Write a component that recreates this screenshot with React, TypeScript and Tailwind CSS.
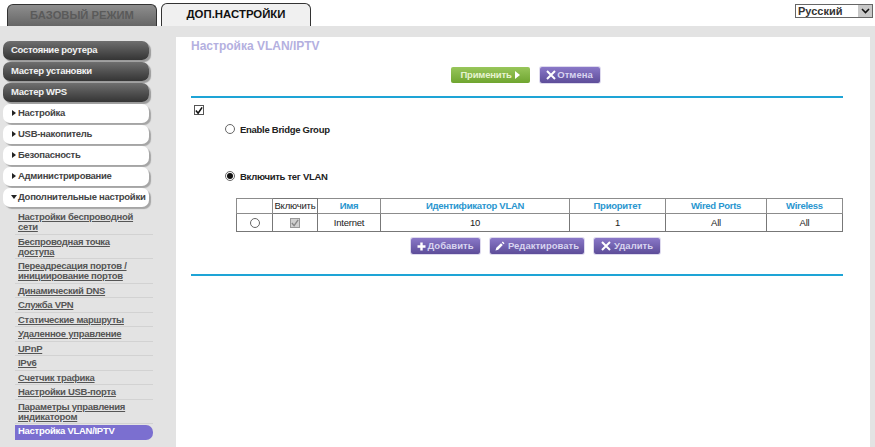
import React from "react";

const dark = ["Состояние роутера", "Мастер установки", "Мастер WPS"];
const light = ["Настройка", "USB-накопитель", "Безопасность", "Администрирование"];
const sub: [string, string][] = [
  ["Настройки беспроводной", "сети"],
  ["Беспроводная точка", "доступа"],
  ["Переадресация портов /", "инициирование портов"],
  ["Динамический DNS", ""],
  ["Служба VPN", ""],
  ["Статические маршруты", ""],
  ["Удаленное управление", ""],
  ["UPnP", ""],
  ["IPv6", ""],
  ["Счетчик трафика", ""],
  ["Настройки USB-порта", ""],
  ["Параметры управления", "индикатором"],
];

function PurpleButton({ w, icon, label, gap }: { w: string; icon: React.ReactNode; label: string; gap: string }) {
  return (
    <div className={`${w} ${gap} h-[16px] rounded-[2px] bg-gradient-to-b from-[#8a78c8] to-[#5d4d99] shadow-[0_0_0_1px_#dedaee] flex items-center justify-center text-[9.5px] font-bold text-[#d8d4f0]`}>
      {icon}
      <span>{label}</span>
    </div>
  );
}

const XIcon = () => (
  <svg width="10" height="10" viewBox="0 0 10 10"><path d="M1 1 L9 9 M9 1 L1 9" stroke="#fff" strokeWidth="2" /></svg>
);
const PlusIcon = () => (
  <svg width="9" height="9" viewBox="0 0 9 9"><path d="M4.5 0.5 V8.5 M0.5 4.5 H8.5" stroke="#fff" strokeWidth="2.4" /></svg>
);
const PenIcon = () => (
  <svg width="10" height="10" viewBox="0 0 10 10"><path d="M0.5 9.5 L1.3 6.8 L6 2.2 L7.8 4 L3.2 8.7 Z M6.8 1.4 L7.8 0.5 L9.5 2.2 L8.6 3.2 Z" fill="#fff" /></svg>
);

const th = "border border-[#8c8c8c] font-bold text-[#2a96cf] text-[9.5px] tracking-[-0.28px] leading-none h-[15px] p-0 text-center";
const td = "border border-[#777] text-[9.5px] tracking-[-0.2px] leading-none text-[#222] p-0 text-center h-[18px]";
const menuText = "text-[9.5px] tracking-[-0.28px] font-bold";

export default function App() {
  return (
    <div className="w-[875px] h-[447px] overflow-hidden bg-white font-['Liberation_Sans',Arial,sans-serif] flex flex-col">
      <div className="h-[26px] shrink-0 flex items-end relative pl-[7px] gap-[4px]">
        <div className="w-[150px] h-[22px] rounded-t-[6px] border border-b-0 border-[#333] bg-gradient-to-b from-[#8e8e8e] to-[#666] flex items-center justify-center text-[11.2px] font-bold text-[#5a5a5a]">
          БАЗОВЫЙ РЕЖИМ
        </div>
        <div className="w-[150px] h-[23px] rounded-t-[6px] border border-b-0 border-[#333] bg-[#f0f0f0] flex items-center justify-center text-[11.4px] font-bold text-[#111]">
          ДОП.НАСТРОЙКИ
        </div>
        <div className="absolute left-[795px] top-[4px] w-[78px] h-[14px] border border-[#666] bg-white flex items-center justify-between text-[11px] font-bold text-[#333] pl-[2px]">
          <span>Русский</span>
          <span className="w-[14px] h-[12px] bg-[#c8c8c8] flex items-center justify-center">
            <svg width="9" height="6" viewBox="0 0 9 6"><path d="M1 1 L4.5 4.5 L8 1" fill="none" stroke="#111" strokeWidth="1.6" /></svg>
          </span>
        </div>
      </div>
      <div className="flex-1 bg-[#e3e3e3] flex pr-[5px]">
        <div className="w-[176px] shrink-0 pt-[15px] pl-[3px]">
          <div className="w-[146px] flex flex-col gap-[2px]">
            {dark.map((t) => (
              <div key={t} className={`h-[19px] rounded-[7px] bg-gradient-to-b from-[#6f6f6f] to-[#353535] shadow-[2px_2px_1px_#9a9a9a] flex items-center pl-[8px] pb-[1px] text-[#f2f2f2] ${menuText}`}>
                {t}
              </div>
            ))}
            {light.map((t) => (
              <div key={t} className={`h-[19px] rounded-[7px] bg-white shadow-[2px_2px_1px_#a5a5a5] flex items-center pl-[9px] pb-[1px] gap-[2px] text-[#444] ${menuText}`}>
                <span className="w-0 h-0 border-y-[3px] border-y-transparent border-l-[4px] border-l-[#222]" />
                {t}
              </div>
            ))}
            <div className={`h-[19px] rounded-[7px] bg-white shadow-[2px_2px_1px_#a5a5a5] flex items-center pl-[8px] pb-[1px] gap-[1px] text-[#444] whitespace-nowrap ${menuText}`}>
              <span className="w-0 h-0 border-x-[3px] border-x-transparent border-t-[4px] border-t-[#222]" />
              Дополнительные настройки
            </div>
          </div>
          <div className="w-[150px] mt-[3px] pl-[12px]">
            {sub.map(([a, b]) => (
              <div key={a} className={`border-b border-[#d2d2d2] pt-[2px] pb-[1.5px] pl-[3px] leading-[10px] text-[#555] underline ${menuText}`}>
                <div>{a}</div>
                {b && <div>{b}</div>}
              </div>
            ))}
            <div className={`mt-[1px] h-[15px] bg-[#7b6fd0] rounded-r-[7px] pl-[3px] leading-[12px] text-white ${menuText}`}>
              Настройка VLAN/IPTV
            </div>
          </div>
        </div>
        <div className="w-[694px] h-[410px] mt-[11px] bg-white pl-[15px] pr-[27px]">
          <div className="text-[12px] leading-[18px] font-bold text-[#b4b0e0]">Настройка VLAN/IPTV</div>
          <div className="mt-[12px] flex justify-center gap-[10px] pl-[16px]">
            <div className="w-[79px] h-[16px] rounded-[2px] bg-gradient-to-b from-[#98c65a] to-[#6fa52f] flex items-center justify-center gap-[3px] text-[9.5px] tracking-[-0.2px] font-bold text-[#e6f3d0]">
              Применить
              <span className="w-0 h-0 border-y-[4px] border-y-transparent border-l-[5px] border-l-white" />
            </div>
            <PurpleButton w="w-[60px]" gap="gap-[1px]" icon={<XIcon />} label="Отмена" />
          </div>
          <div className="mt-[13px] h-[1px] border-t-[2px] border-[#1ea4d6]" />
          <div className="mt-[7px] pl-[3px]">
            <div className="w-[10px] h-[10px] border border-[#555] bg-white flex items-center justify-center">
              <svg width="9" height="9" viewBox="0 0 9 9"><path d="M1 4.5 L3.5 7.5 L8 1" fill="none" stroke="#111" strokeWidth="1.8" /></svg>
            </div>
          </div>
          <div className={`mt-[8px] pl-[34px] flex items-center gap-[5px] text-[#222] h-[12px] ${menuText}`}>
            <span className="w-[10px] h-[10px] rounded-full border border-[#666] bg-white" />
            <span className="mt-[3px]">Enable Bridge Group</span>
          </div>
          <div className={`mt-[35px] pl-[34px] flex items-center gap-[5px] text-[#222] h-[12px] ${menuText}`}>
            <span className="w-[10px] h-[10px] rounded-full border border-[#666] bg-white flex items-center justify-center">
              <span className="w-[6px] h-[6px] rounded-full bg-[#111]" />
            </span>
            <span className="mt-[3px]">Включить тег VLAN</span>
          </div>
          <table className="ml-[45px] mt-[16px] w-[606px] border-collapse table-fixed">
            <colgroup>
              <col className="w-[36px]" /><col className="w-[45px]" /><col className="w-[63px]" /><col className="w-[189px]" /><col className="w-[96px]" /><col className="w-[101px]" /><col className="w-[76px]" />
            </colgroup>
            <thead>
              <tr>
                <th className={th}></th>
                <th className="border border-[#777] text-[9.5px] tracking-[-0.2px] leading-none text-[#222] font-normal h-[15px] p-0 text-center whitespace-nowrap">Включить</th>
                <th className={th}>Имя</th>
                <th className={th}>Идентификатор VLAN</th>
                <th className={th}>Приоритет</th>
                <th className={th}>Wired Ports</th>
                <th className={th}>Wireless</th>
              </tr>
            </thead>
            <tbody>
              <tr>
                <td className={td}><span className="inline-block align-middle w-[10px] h-[10px] rounded-full border border-[#666]" /></td>
                <td className={td}>
                  <span className="inline-flex align-middle w-[10px] h-[10px] bg-[#d0d0d0] border border-[#999] items-center justify-center">
                    <svg width="8" height="8" viewBox="0 0 9 9"><path d="M1 4.5 L3.5 7.5 L8 1" fill="none" stroke="#888" strokeWidth="1.6" /></svg>
                  </span>
                </td>
                <td className={td}>Internet</td>
                <td className={td}>10</td>
                <td className={td}>1</td>
                <td className={td}>All</td>
                <td className={td}>All</td>
              </tr>
            </tbody>
          </table>
          <div className="mt-[6px] flex gap-[10px] pl-[220px]">
            <PurpleButton w="w-[69px]" gap="gap-[1px]" icon={<PlusIcon />} label="Добавить" />
            <PurpleButton w="w-[94px]" gap="gap-[3px]" icon={<PenIcon />} label="Редактировать" />
            <PurpleButton w="w-[66px]" gap="gap-[3px]" icon={<XIcon />} label="Удалить" />
          </div>
          <div className="mt-[20px] h-[1px] border-t-[2px] border-[#1ea4d6]" />
        </div>
      </div>
    </div>
  );
}
